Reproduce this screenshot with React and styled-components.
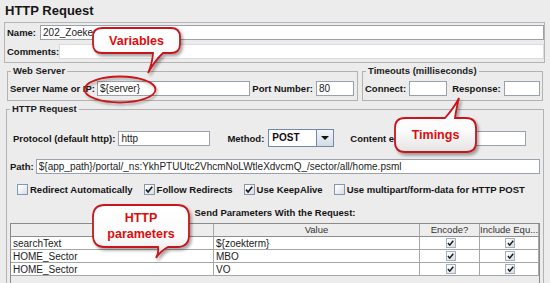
import React from "react";
import styled, { createGlobalStyle } from "styled-components";

const FONT = `"Liberation Sans", Arial, sans-serif`;

const GlobalStyle = createGlobalStyle`
  html, body { margin: 0; padding: 0; background: #ececec; overflow: hidden; }
  * { box-sizing: border-box; }
`;

const Page = styled.div`
  position: relative;
  width: 550px;
  height: 283px;
  overflow: hidden;
  background: #ececec;
  font-family: ${FONT};
  color: #111;
`;

const Title = styled.div`
  height: 22px;
  line-height: 22px;
  padding-left: 5px;
  font-size: 13px;
  font-weight: bold;
  color: #151515;
`;

const NamePanel = styled.div`
  margin: 0 5px 0 4px;
  border: 1px solid #b4b4b4;
  padding: 2px 0 3px 1px;
  display: flex;
  flex-direction: column;
  gap: 4px;
`;

const Row = styled.div`
  display: flex;
  align-items: center;
  height: ${(p) => p.$h || 15}px;
  margin-top: ${(p) => p.$mt || 0}px;
  padding-left: ${(p) => p.$pl || 0}px;
  padding-right: ${(p) => p.$pr || 0}px;
  gap: ${(p) => p.$gap || 0}px;
`;

const Label = styled.span`
  font-size: 9.5px;
  font-weight: bold;
  white-space: nowrap;
  color: #141414;
  margin-left: ${(p) => p.$ml || 0}px;
  flex: none;
`;

const Input = styled.input`
  height: 15px;
  margin: 0 0 0 ${(p) => p.$ml || 0}px;
  padding: 0 2px;
  border: 1px solid ${(p) => (p.$soft ? "#dcdcdc" : "#9aa1aa")};
  background: #fff;
  font-family: ${FONT};
  font-size: 10px;
  color: #222;
  outline: none;
  border-radius: 0;
  flex: ${(p) => (p.$w ? "none" : "1 1 0")};
  width: ${(p) => (p.$w ? `${p.$w}px` : "auto")};
  min-width: 0;
`;

const ServerRow = styled.div`
  display: flex;
  gap: 4px;
  margin-top: 2px;
  padding: 0 7px 0 7px;
`;

const Group = styled.fieldset`
  margin: ${(p) => p.$m || 0};
  padding: 0;
  min-width: 0;
  border: 1px solid #b2b2b2;
  border-radius: 0;
  flex: ${(p) => (p.$w ? "none" : "1 1 0")};
  width: ${(p) => (p.$w ? `${p.$w}px` : "auto")};
  height: ${(p) => (p.$h ? `${p.$h}px` : "auto")};
`;

const Legend = styled.legend`
  margin-left: 3px;
  padding: 0 2px;
  font-size: 9.5px;
  line-height: 12px;
  font-weight: bold;
  color: #1c1c1c;
`;

const GroupBody = styled.div`
  padding: 4px 2px 4px 2px;
`;

const Select = styled.div`
  display: flex;
  width: 66px;
  height: 18px;
  margin-left: 4px;
  border: 1px solid #7288a8;
  background: #fff;
  flex: none;
`;

const SelectValue = styled.span`
  flex: 1;
  padding-left: 3px;
  font-size: 10px;
  font-weight: bold;
  line-height: 16px;
  color: #111;
`;

const SelectButton = styled.span`
  width: 17px;
  border-left: 1px solid #7288a8;
  background: linear-gradient(#f3f6f9, #d3dbe5);
  display: flex;
  align-items: center;
  justify-content: center;
`;

const Arrow = styled.span`
  width: 0;
  height: 0;
  border-left: 4px solid transparent;
  border-right: 4px solid transparent;
  border-top: 4px solid #111;
`;

const CheckItem = styled.span`
  display: inline-flex;
  align-items: center;
  gap: 2px;
`;

const Box = styled.span`
  width: ${(p) => p.$s}px;
  height: ${(p) => p.$s}px;
  border: 1px solid ${(p) => (p.$light ? "#a5b0bd" : "#8796a9")};
  background: linear-gradient(135deg, #ffffff 10%, #d6dee8 100%);
  display: inline-flex;
  align-items: center;
  justify-content: center;
  flex: none;
`;

const SectionTitle = styled.div`
  margin-top: 12px;
  text-align: center;
  font-size: 9.5px;
  line-height: 12px;
  font-weight: bold;
  color: #141414;
`;

const ScrollPane = styled.div`
  margin: 4px 3px 0 3px;
  border: 1px solid #8a8a8a;
  height: 80px;
  background: #ececec;
`;

const Grid = styled.div`
  display: grid;
  grid-template-columns: 203px 206px 60px 1fr;
`;

const HeadCell = styled.div`
  height: 13px;
  line-height: 12px;
  background: #ededed;
  border-right: 1px solid #a8a8a8;
  border-bottom: 1px solid #8f8f8f;
  font-size: 9.5px;
  text-align: center;
  color: #333;
  white-space: nowrap;
  overflow: hidden;
`;

const Cell = styled.div`
  height: 13px;
  background: #fff;
  border-right: 1px solid #a6a6a6;
  border-bottom: 1px solid #a6a6a6;
  font-size: 10px;
  color: #1a1a1a;
  padding-left: 2px;
  display: flex;
  align-items: center;
  justify-content: ${(p) => (p.$center ? "center" : "flex-start")};
  white-space: nowrap;
`;

const CalloutWrap = styled.div`
  position: absolute;
  left: ${(p) => p.$x}px;
  top: ${(p) => p.$y}px;
  width: ${(p) => p.$w}px;
  height: ${(p) => p.$h}px;
  display: flex;
  align-items: center;
  justify-content: center;
  text-align: center;
`;

const Shape = styled.svg`
  position: absolute;
  left: 0;
  top: 0;
  overflow: visible;
`;

const CalloutText = styled.span`
  position: relative;
  color: #dc0d0d;
  font-size: 12.5px;
  font-weight: bold;
  line-height: 16px;
`;

const Ring = styled.svg`
  position: absolute;
  left: 82px;
  top: 75px;
  overflow: visible;
`;

const Tick = ({ size = 8 }) => (
  <svg width={size} height={size - 1} viewBox="0 0 8 7">
    <path d="M1 3.6 L3.1 6 L7.2 0.8" fill="none" stroke="#1b1b1b" strokeWidth="1.7" />
  </svg>
);

const CheckBox = ({ checked, children }) => (
  <CheckItem>
    <Box $s={11}>{checked && <Tick />}</Box>
    <Label>{children}</Label>
  </CheckItem>
);

function bubblePath(w, h, r, t) {
  if (t.edge === "top") {
    return `M${r},0 H${t.x1} Q${(t.x1 + t.tx) / 2 + 2},${t.ty / 2} ${t.tx},${t.ty} Q${(t.x2 + t.tx) / 2 - 1},${t.ty / 2 + 2} ${t.x2},0 H${w - r} Q${w},0 ${w},${r} V${h - r} Q${w},${h} ${w - r},${h} H${r} Q0,${h} 0,${h - r} V${r} Q0,0 ${r},0 Z`;
  }
  return `M${r},0 H${w - r} Q${w},0 ${w},${r} V${h - r} Q${w},${h} ${w - r},${h} H${t.x2} Q${(t.x2 + t.tx) / 2 - 1},${(h + t.ty) / 2 - 2} ${t.tx},${t.ty} Q${(t.x1 + t.tx) / 2 + 2},${(h + t.ty) / 2} ${t.x1},${h} H${r} Q0,${h} 0,${h - r} V${r} Q0,0 ${r},0 Z`;
}

const Callout = ({ id, x, y, w, h, r, tail, children }) => (
  <CalloutWrap $x={x} $y={y} $w={w} $h={h}>
    <Shape width={w} height={h}>
      <defs>
        <linearGradient id={`g-${id}`} x1="0" y1="0" x2="0" y2="1">
          <stop offset="0" stopColor="#ffffff" />
          <stop offset="0.6" stopColor="#fbfbfb" />
          <stop offset="1" stopColor="#e4e4e4" />
        </linearGradient>
        <filter id={`f-${id}`} x="-30%" y="-30%" width="160%" height="170%">
          <feDropShadow dx="2" dy="2.5" stdDeviation="1.6" floodColor="#000" floodOpacity="0.35" />
        </filter>
      </defs>
      <path
        d={bubblePath(w, h, r, tail)}
        fill={`url(#g-${id})`}
        stroke="#c8141a"
        strokeWidth="1.8"
        filter={`url(#f-${id})`}
      />
    </Shape>
    <CalloutText>{children}</CalloutText>
  </CalloutWrap>
);

const params = [
  ["searchText", "${zoekterm}"],
  ["HOME_Sector", "MBO"],
  ["HOME_Sector", "VO"],
];

export default function App() {
  return (
    <Page>
      <GlobalStyle />
      <Title>HTTP Request</Title>

      <NamePanel>
        <Row>
          <Label $ml={1}>Name:</Label>
          <Input $ml={4} readOnly defaultValue="202_Zoekeresultaten" />
        </Row>
        <Row>
          <Label $ml={1}>Comments:</Label>
          <Input $ml={0} $soft readOnly defaultValue="" />
        </Row>
      </NamePanel>

      <ServerRow>
        <Group $w={351}>
          <Legend>Web Server</Legend>
          <GroupBody>
            <Row>
              <Label>Server Name or IP:</Label>
              <Input $ml={2} readOnly defaultValue="${server}" />
              <Label $ml={2}>Port Number:</Label>
              <Input $ml={3} $w={38} readOnly defaultValue="80" />
              <span style={{ width: 1 }} />
            </Row>
          </GroupBody>
        </Group>
        <Group>
          <Legend>Timeouts (milliseconds)</Legend>
          <GroupBody>
            <Row>
              <Label>Connect:</Label>
              <Input $ml={3} $w={38} readOnly defaultValue="" />
              <Label $ml={5}>Response:</Label>
              <Input $ml={3} readOnly defaultValue="" />
            </Row>
          </GroupBody>
        </Group>
      </ServerRow>

      <Group $m="2px 6px 0 6px" $h={200}>
        <Legend>HTTP Request</Legend>
        <Row $h={18} $mt={14} $pl={6}>
          <Label>Protocol (default http):</Label>
          <Input $ml={3} $w={92} readOnly defaultValue="http" />
          <Label $ml={17}>Method:</Label>
          <Select>
            <SelectValue>POST</SelectValue>
            <SelectButton>
              <Arrow />
            </SelectButton>
          </Select>
          <Label $ml={16}>Content encoding:</Label>
          <Input $ml={3} $w={89} readOnly defaultValue="" />
        </Row>
        <Row $mt={12} $pl={3} $pr={3}>
          <Label>Path:</Label>
          <Input
            $ml={2}
            readOnly
            defaultValue="${app_path}/portal/_ns:YkhPTUUtc2VhcmNoLWtleXdvcmQ_/sector/all/home.psml"
          />
        </Row>
        <Row $h={11} $mt={10} $pl={10} $gap={11}>
          <CheckBox>Redirect Automatically</CheckBox>
          <CheckBox checked>Follow Redirects</CheckBox>
          <CheckBox checked>Use KeepAlive</CheckBox>
          <CheckBox>Use multipart/form-data for HTTP POST</CheckBox>
        </Row>
        <SectionTitle>Send Parameters With the Request:</SectionTitle>
        <ScrollPane>
          <Grid>
            <HeadCell>Name:</HeadCell>
            <HeadCell>Value</HeadCell>
            <HeadCell>Encode?</HeadCell>
            <HeadCell>Include Equ...</HeadCell>
            {params.map(([n, v], i) => (
              <React.Fragment key={i}>
                <Cell>{n}</Cell>
                <Cell>{v}</Cell>
                <Cell $center>
                  <Box $s={10} $light>
                    <Tick size={7} />
                  </Box>
                </Cell>
                <Cell $center>
                  <Box $s={10} $light>
                    <Tick size={7} />
                  </Box>
                </Cell>
              </React.Fragment>
            ))}
          </Grid>
        </ScrollPane>
      </Group>

      <Ring width="76" height="30">
        <defs>
          <filter id="ring-sh" x="-20%" y="-30%" width="140%" height="170%">
            <feDropShadow dx="1.5" dy="2" stdDeviation="1.2" floodColor="#000" floodOpacity="0.3" />
          </filter>
        </defs>
        <ellipse cx="38" cy="14.5" rx="35.5" ry="13" fill="none" stroke="#c8141a" strokeWidth="1.8" filter="url(#ring-sh)" />
      </Ring>

      <Callout id="vars" x={93} y={28} w={87} h={25} r={9} tail={{ edge: "bottom", x1: 60, x2: 70, tx: 55, ty: 45 }}>
        Variables
      </Callout>
      <Callout id="tim" x={395} y={118} w={81} h={34} r={10} tail={{ edge: "top", x1: 50, x2: 60, tx: 64, ty: -20 }}>
        Timings
      </Callout>
      <Callout id="par" x={93} y={205} w={96} h={42} r={12} tail={{ edge: "bottom", x1: 65, x2: 75, tx: 63, ty: 53 }}>
        HTTP
        <br />
        parameters
      </Callout>
    </Page>
  );
}
